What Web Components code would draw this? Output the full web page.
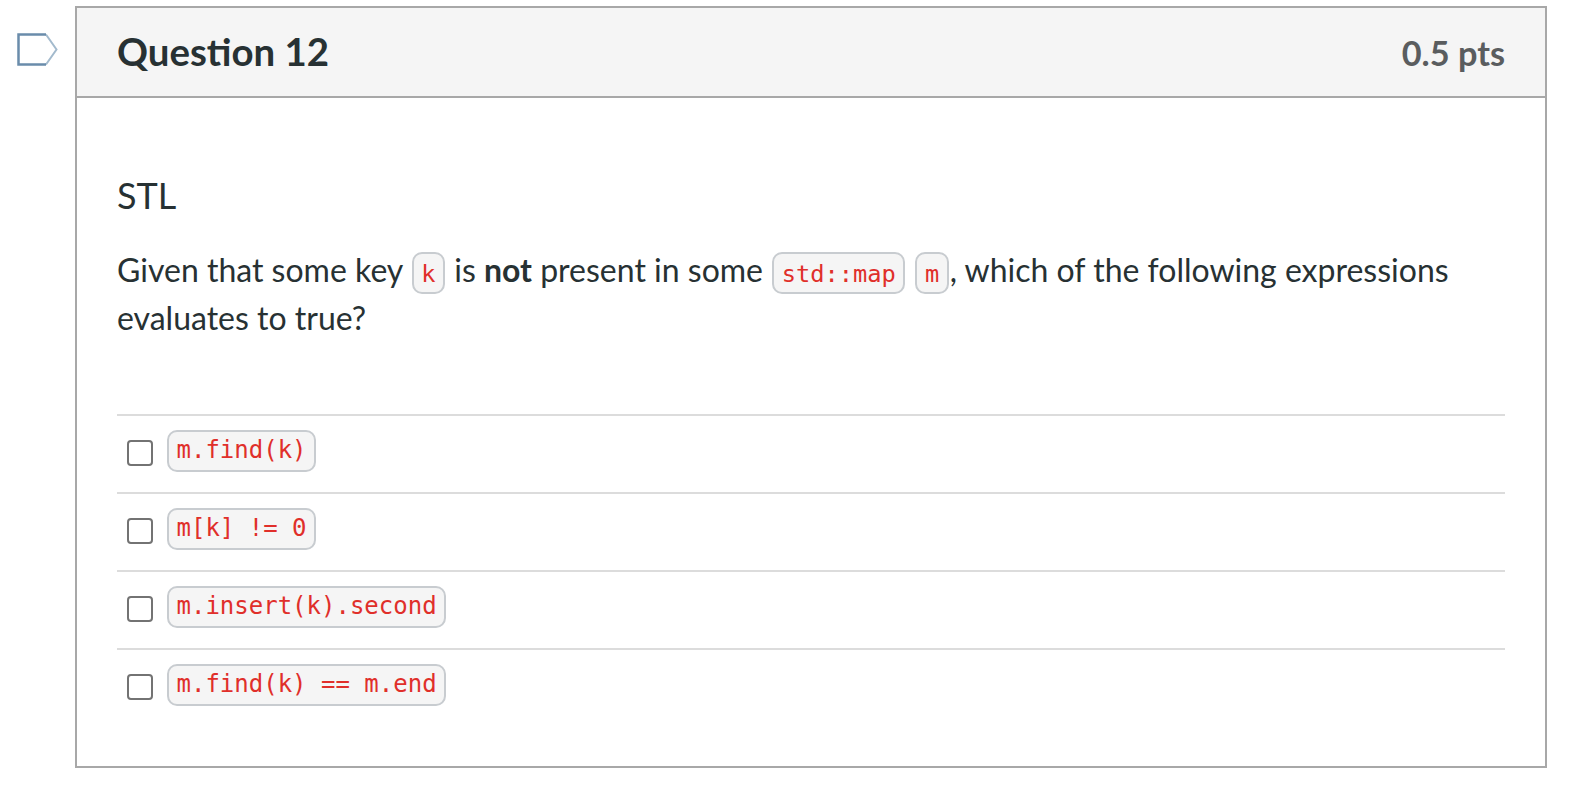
<!DOCTYPE html>
<html lang="en">

<head>
    <meta charset="UTF-8">
    <title>Question 12</title>
    <style>
        body {
            margin: 0;
            background: #fff;
            color: #273133;
            font-family: Lato, "Liberation Sans", sans-serif;
        }

        .title {
            font-size: 36px;
        }

        .text {
            --code-size: 23.7px;
            --code-line: 41px;
        }
    </style>
</head>

<body>

    <quiz-question>
        <span slot="name">Question 12</span>
        <span slot="points">0.5 pts</span>
        <p class="title">STL</p>
        <p class="text">Given that some key <inline-code>k</inline-code> is <b>not</b> present in some <inline-code>std::map</inline-code> <inline-code>m</inline-code>, which of the following expressions evaluates to true?</p>
        <answer-row slot="answers"><inline-code>m.find(k)</inline-code></answer-row>
        <answer-row slot="answers"><inline-code>m[k] != 0</inline-code></answer-row>
        <answer-row slot="answers"><inline-code>m.insert(k).second</inline-code></answer-row>
        <answer-row slot="answers"><inline-code>m.find(k) == m.end</inline-code></answer-row>
    </quiz-question>

    <template id="question-tpl">
        <style>
            :host {
                display: flex;
                align-items: flex-start;
                padding: 6px 49px 0 16px;
                font-size: 32px;
                line-height: 48px;
            }

            .flag {
                flex: none;
                width: 43px;
                height: 33px;
                margin: 27px 16px 0 0;
            }

            .card {
                flex: 1;
                min-width: 0;
                height: 762px;
                box-sizing: border-box;
                border: 2px solid #a8a8a8;
            }

            .head {
                display: flex;
                justify-content: space-between;
                align-items: center;
                box-sizing: border-box;
                height: 90px;
                padding: 0 40px;
                background: #f5f5f5;
                border-bottom: 2px solid #a8a8a8;
            }

            .name {
                font-size: 38.4px;
                font-weight: 700;
                margin-top: -2px;
            }

            .points {
                font-size: 34.3px;
                font-weight: 700;
                color: #5a5d5f;
                margin-top: 2px;
            }

            .body {
                padding: 73px 40px 0;
            }

            ::slotted(p) {
                margin: 0 0 27px;
            }

            /* collapses with the margin of the last paragraph */
            .answers {
                margin-top: 72px;
            }
        </style>
        <svg class="flag" viewBox="0 0 43 33">
            <path d="M30 1.5L40.5 16.5L30 31.5" fill="#fff" stroke="#a3bacd" stroke-width="2" />
            <path d="M30 1.5H2.5V31.5H30" fill="none" stroke="#6a8cab" stroke-width="2.5" />
        </svg>
        <section class="card">
            <header class="head">
                <span class="name"><slot name="name"></slot></span>
                <span class="points"><slot name="points"></slot></span>
            </header>
            <div class="body">
                <slot></slot>
                <div class="answers">
                    <slot name="answers"></slot>
                </div>
            </div>
        </section>
    </template>

    <template id="answer-tpl">
        <style>
            :host {
                display: flex;
                align-items: flex-start;
                gap: 13px;
                box-sizing: border-box;
                height: 78px;
                padding: 14px 0 0 10px;
                border-top: 2px solid #dcdcdc;
            }

            .box {
                flex: none;
                box-sizing: border-box;
                width: 26px;
                height: 26px;
                margin-top: 10px;
                border: 2px solid #737373;
                border-radius: 4px;
                background: #fff;
            }
        </style>
        <span class="box"></span>
        <slot></slot>
    </template>

    <template id="code-tpl">
        <style>
            :host {
                display: inline-block;
                box-sizing: border-box;
                height: 42px;
                padding: 0 7.5px;
                margin: 0 1px -2px;
                background: #f5f5f5;
                border: 2px solid #c8ccd0;
                border-radius: 10px;
                color: #e02f2a;
                font-family: "DejaVu Sans Mono", "Liberation Mono", monospace;
                font-size: var(--code-size, 24px);
                line-height: var(--code-line, 37px);
            }

            slot {
                white-space: pre;
            }
        </style>
        <slot></slot>
    </template>

    <script>
        class QuizQuestion extends HTMLElement {
            constructor() {
                super();
                const tpl = document.querySelector('#question-tpl').content;
                this.attachShadow({ mode: 'open' }).appendChild(tpl.cloneNode(true));
            }
        }
        class AnswerRow extends HTMLElement {
            constructor() {
                super();
                const tpl = document.querySelector('#answer-tpl').content;
                this.attachShadow({ mode: 'open' }).appendChild(tpl.cloneNode(true));
            }
        }
        class InlineCode extends HTMLElement {
            constructor() {
                super();
                const tpl = document.querySelector('#code-tpl').content;
                this.attachShadow({ mode: 'open' }).appendChild(tpl.cloneNode(true));
            }
        }
        customElements.define('quiz-question', QuizQuestion);
        customElements.define('answer-row', AnswerRow);
        customElements.define('inline-code', InlineCode);
    </script>
</body>

</html>
